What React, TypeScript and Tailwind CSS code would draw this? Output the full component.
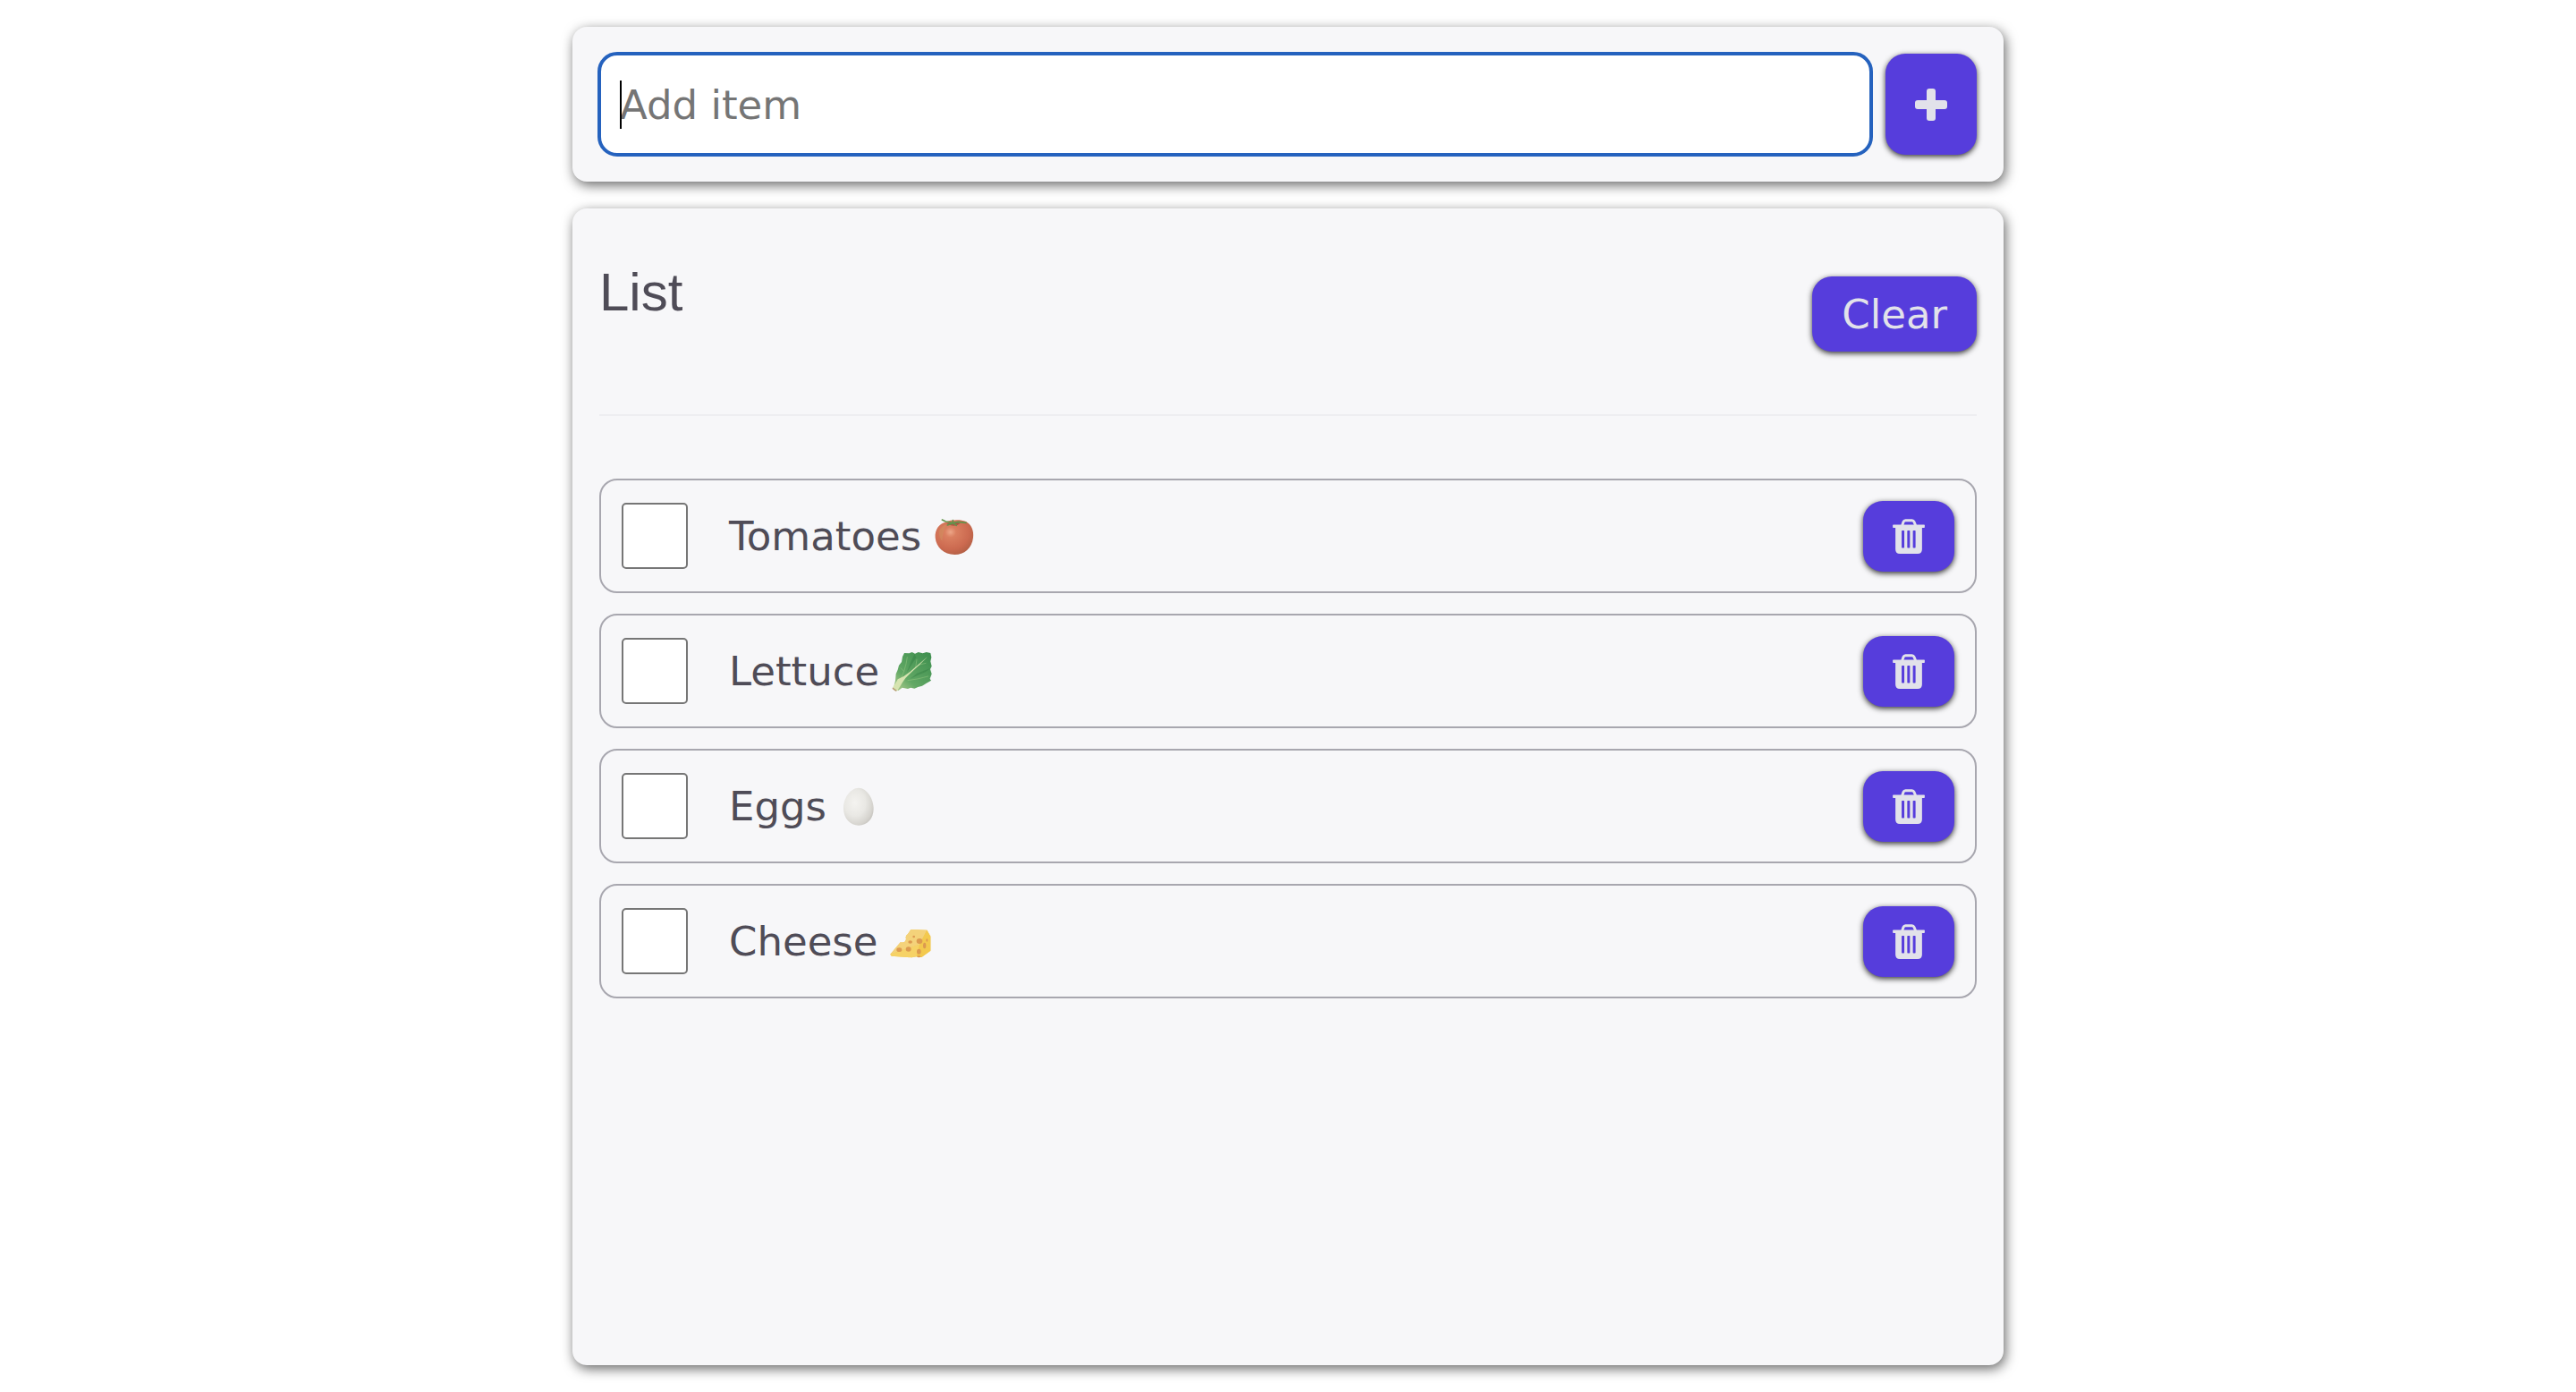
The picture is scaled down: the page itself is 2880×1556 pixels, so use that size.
import { useState } from "react";

const shadowButton =
  "rounded-[22px] bg-[#563ddc] text-[#e2e2ea] shadow-[0_2px_6px_rgba(0,0,0,0.8)]";
const panel =
  "rounded-[16px] bg-[#f7f7f9] p-[30px] shadow-[2px_4px_14px_rgba(0,0,0,0.6)]";

function PlusIcon() {
  return (
    <svg viewBox="0 0 36 36" className="size-9" fill="currentColor" aria-hidden="true">
      <rect x="13" y="0" width="10" height="36" rx="3" />
      <rect x="0" y="13" width="36" height="10" rx="3" />
    </svg>
  );
}

function TrashIcon() {
  return (
    <svg viewBox="0 0 108 118" className="h-[39px] w-9" aria-hidden="true">
      <path
        fill="none"
        stroke="currentColor"
        strokeWidth="9"
        d="M32 22 L36 10 Q38 5 43 5 H65 Q70 5 72 10 L77 22"
      />
      <rect x="0" y="20" width="108" height="10" rx="2" fill="currentColor" />
      <path
        fill="currentColor"
        fillRule="evenodd"
        d="M9 26 H99 V103 Q99 118 84 118 H24 Q9 118 9 103 Z M32 39 Q30 39 30 41 V96 Q30 98 32 98 H37 Q39 98 39 96 V41 Q39 39 37 39 Z M51 39 Q49 39 49 41 V96 Q49 98 51 98 H56 Q58 98 58 96 V41 Q58 39 56 39 Z M70 39 Q68 39 68 41 V96 Q68 98 70 98 H75 Q77 98 77 96 V41 Q77 39 75 39 Z"
      />
    </svg>
  );
}

function Tomato() {
  return (
    <svg viewBox="0 0 138 138" className="size-[46px]" role="img" aria-label="tomato">
      <defs>
        <radialGradient id="tomato-skin" cx="0.4" cy="0.35" r="0.75">
          <stop offset="0" stopColor="#eda688" />
          <stop offset="0.2" stopColor="#da7f60" />
          <stop offset="0.65" stopColor="#cc6a50" />
          <stop offset="1" stopColor="#ab5c42" />
        </radialGradient>
      </defs>
      <path
        fill="url(#tomato-skin)"
        d="M40 20 C55 12 90 10 108 18 C126 28 135 48 132 72 C128 108 102 129 70 129 C34 129 8 104 5 72 C3 45 18 24 40 20 Z"
      />
      <path d="M18 50 Q25 32 44 28 Q30 50 28 84 Q16 68 18 50Z" fill="#cf9460" opacity="0.45" />
      <path d="M42 25 Q66 16 90 23 Q74 36 58 31Z" fill="#8c4030" opacity="0.6" />
      <path
        fill="none"
        stroke="#63934b"
        strokeWidth="5"
        strokeLinecap="round"
        strokeLinejoin="round"
        d="M28 12 L40 18 L64 23 L82 19 L108 22 M46 30 L64 23 L64 14 M64 23 L76 31"
      />
    </svg>
  );
}

function Lettuce() {
  return (
    <svg viewBox="0 0 138 138" className="size-[46px]" role="img" aria-label="lettuce">
      <defs>
        <linearGradient id="lettuce-leaf" x1="0" y1="1" x2="0.9" y2="0">
          <stop offset="0" stopColor="#b9d193" />
          <stop offset="0.35" stopColor="#62a865" />
          <stop offset="1" stopColor="#3f8f4f" />
        </linearGradient>
      </defs>
      <path
        fill="url(#lettuce-leaf)"
        d="M6 122 L12 98 L14 76 L20 62 L24 47 L33 36 L36 18 L42 6 L58 7 L68 3 L78 8 L89 3 L104 7 L116 3 L130 6 L133 20 L130 34 L134 50 L129 60 L134 76 L128 92 L132 98 L115 108 L102 116 L88 120 L76 125 L64 122 L54 126 L35 122 L22 132 Z"
      />
      <path
        d="M76 10 L82 20 L60 56 L50 72 L62 40Z M132 56 L112 70 L80 84 L62 92 L84 74Z"
        fill="#246f38"
        opacity="0.3"
      />
      <path
        fill="none"
        stroke="#a6d18b"
        strokeWidth="2"
        strokeLinecap="round"
        opacity="0.6"
        d="M26 100 Q46 66 52 20 M40 66 L30 56 M80 54 L84 28 M90 46 L114 40 M54 98 Q88 94 122 84"
      />
      <path
        d="M4 120 Q14 106 20 94 Q40 86 62 68 Q90 44 120 18 Q94 46 65 71 Q46 88 36 104 Q28 118 18 133 Q10 134 4 120Z"
        fill="#d6e4b0"
      />
      <path d="M3 121 L18 132 L13 134 L2 126Z" fill="#b79d75" />
    </svg>
  );
}

function Egg() {
  return (
    <svg viewBox="0 0 138 138" className="size-[46px]" role="img" aria-label="egg">
      <defs>
        <radialGradient id="egg-shell" cx="0.38" cy="0.4" r="0.7">
          <stop offset="0" stopColor="#f4f3f0" />
          <stop offset="0.5" stopColor="#e9e8e4" />
          <stop offset="0.85" stopColor="#d5d3ce" />
          <stop offset="1" stopColor="#c3c1bc" />
        </radialGradient>
      </defs>
      <path
        fill="url(#egg-shell)"
        d="M66 5 C93 5 116 42 116 75 C116 109 94 131 66 131 C37 131 15 108 15 72 C15 38 39 5 66 5 Z"
      />
    </svg>
  );
}

function Cheese() {
  return (
    <svg viewBox="0 0 138 138" className="size-[46px]" role="img" aria-label="cheese">
      <path d="M1 110 L35 70 Q53 74 54 58 Q50 49 60 42 L70 27 L124 29 L136 50 V98 L106 120 L89 118 L73 121 L5 116Z" fill="#f0c556" />
      <path d="M1 110 L35 70 Q53 74 54 58 Q50 49 60 42 L70 27 L124 29 L99 77Z" fill="#f4d27a" />
      <path d="M99 77 L124 29 L136 50 V98 L106 120 L89 118Z" fill="#f3c94e" />
      <path d="M1 110 L99 77 L89 118 L73 121 L5 116Z" fill="#f6d266" />
      <g fill="#dc9a50">
        <ellipse cx="99" cy="66" rx="10" ry="9" />
        <ellipse cx="68" cy="69" rx="7" ry="5" />
        <ellipse cx="80" cy="51" rx="4" ry="4" />
        <ellipse cx="62" cy="93" rx="9" ry="8" />
        <ellipse cx="31" cy="95" rx="9" ry="7" />
        <ellipse cx="116" cy="81" rx="5" ry="10" />
        <ellipse cx="97" cy="101" rx="7" ry="9" />
        <ellipse cx="124" cy="63" rx="3" ry="5" />
        <ellipse cx="97" cy="118" rx="6" ry="3" />
      </g>
    </svg>
  );
}

const items = [
  { id: "tomatoes", name: "Tomatoes", Picture: Tomato },
  { id: "lettuce", name: "Lettuce", Picture: Lettuce },
  { id: "eggs", name: "Eggs", Picture: Egg },
  { id: "cheese", name: "Cheese", Picture: Cheese },
];

export default function App() {
  const [text, setText] = useState("");
  return (
    <main className="mx-auto flex min-h-screen max-w-[1660px] flex-col gap-[30px] bg-white p-[30px] font-['Verdana','DejaVu_Sans',sans-serif] text-[45px] leading-[54px] text-[#4f4c57]">
      <form
        className={`${panel} flex gap-4`}
        onSubmit={(event) => event.preventDefault()}
      >
        <div className="relative min-w-0 flex-1">
          <input
            type="text"
            aria-label="Add item"
            placeholder="Add item"
            autoFocus
            value={text}
            onChange={(event) => setText(event.target.value)}
            className="block h-[113px] w-full rounded-[20px] bg-white px-[23px] pt-0.5 outline-4 -outline-offset-2 outline-[#2562be] placeholder:text-[#757575]"
          />
          {text === "" && (
            <span
              aria-hidden="true"
              className="pointer-events-none absolute inset-y-0 left-[23px] my-auto h-[54px] w-0.5 bg-black"
            />
          )}
        </div>
        <button
          type="submit"
          aria-label="Add"
          className={`${shadowButton} flex w-[102px] items-center justify-center`}
        >
          <PlusIcon />
        </button>
      </form>

      <section className={`${panel} flex-1`}>
        <header className="flex items-start justify-between border-b-2 border-[#eeeef1] pt-[30px] pb-[70px]">
          <h2 className="font-['Liberation_Sans',Arial,sans-serif] text-[60px] leading-[68px]">
            List
          </h2>
          <button type="button" className={`${shadowButton} mt-4 h-[84px] px-[33px] pt-0.5`}>
            Clear
          </button>
        </header>
        <ul className="mt-[70px] flex flex-col gap-[23px]">
          {items.map(({ id, name, Picture }) => (
            <li
              key={id}
              className="flex h-32 items-center rounded-[20px] border-2 border-[#a8a7af] px-[23px]"
            >
              <input
                id={id}
                type="checkbox"
                className="size-[74px] shrink-0 appearance-none rounded-[5px] border-2 border-[#767676] bg-white checked:bg-[#563ddc]"
              />
              <label htmlFor={id} className="ml-[46px] flex flex-1 items-center gap-[14px] pt-0.5">
                {name}
                <Picture />
              </label>
              <button
                type="button"
                aria-label={`Delete ${name}`}
                className={`${shadowButton} flex h-[79px] w-[102px] items-center justify-center`}
              >
                <TrashIcon />
              </button>
            </li>
          ))}
        </ul>
      </section>
    </main>
  );
}
